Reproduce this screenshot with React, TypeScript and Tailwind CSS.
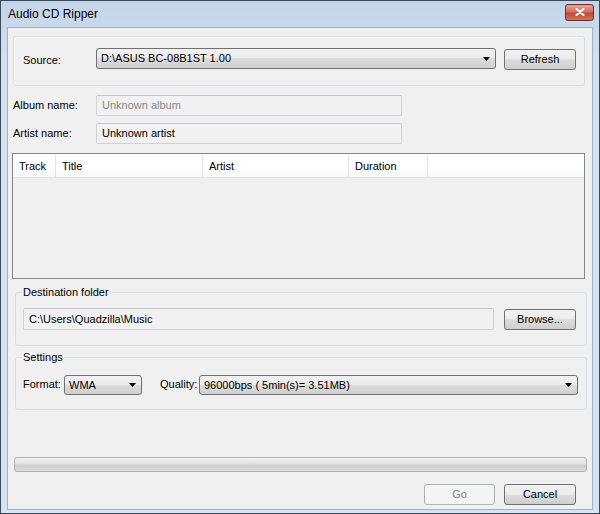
import type { ReactNode } from 'react';

const font = { fontFamily: '"Liberation Sans", Arial, sans-serif' };

function Arrow() {
  return (
    <svg width="7" height="4" viewBox="0 0 7 4" className="shrink-0">
      <path d="M0 0 H7 L3.5 4 Z" fill="#000" />
    </svg>
  );
}

function Button({ children, disabled, className }: { children: ReactNode; disabled?: boolean; className: string }) {
  return (
    <div
      className={
        'flex items-center justify-center rounded-[3px] border text-[11px] ' +
        (disabled
          ? 'border-[#adb2b5] bg-[#f4f4f4] text-[#838383] '
          : 'border-[#707070] bg-[linear-gradient(#f2f2f2_0%,#ebebeb_50%,#dddddd_50%,#cfcfcf_100%)] text-black ') +
        className
      }
    >
      {children}
    </div>
  );
}

function Combo({ text, className }: { text: string; className: string }) {
  return (
    <div
      className={
        'flex items-center justify-between rounded-[3px] border border-[#707070] bg-[linear-gradient(#f2f2f2_0%,#ebebeb_50%,#dddddd_50%,#cfcfcf_100%)] pl-[4px] pr-[5px] text-[11px] text-black ' +
        className
      }
    >
      <span className="whitespace-pre">{text}</span>
      <Arrow />
    </div>
  );
}

function TextBox({ text, muted, className }: { text: string; muted?: boolean; className: string }) {
  return (
    <div
      className={
        'flex items-center rounded-[2px] border border-[#cfd3d8] border-t-[#c3c6cb] bg-[#f1f1f1] pl-[5px] text-[11px] ' +
        (muted ? 'text-[#8a8a8a] ' : 'text-black ') +
        className
      }
    >
      <span className="whitespace-pre">{text}</span>
    </div>
  );
}

const columns = [
  { label: 'Track', w: 'w-[43px]' },
  { label: 'Title', w: 'w-[147px]' },
  { label: 'Artist', w: 'w-[146px]' },
  { label: 'Duration', w: 'w-[79px]' },
];

export default function App() {
  return (
    <div
      style={font}
      className="flex h-[514px] w-[600px] flex-col border border-[#3d4a5a] bg-[linear-gradient(#c3d4e9,#d3e1f1_60px,#d6e3f2)] text-black"
    >
      <div className="flex h-[26px] items-center justify-between pl-[7px] pr-[5px]">
        <span className="text-[12px]">Audio CD Ripper</span>
        <div className="mt-[-4px] flex h-[17px] w-[29px] items-center justify-center rounded-[3px] border border-[#6d2e2a] bg-[linear-gradient(#e8a394,#d0705f_45%,#c24a38_55%,#d4735f)]">
          <svg width="10" height="8" viewBox="0 0 10 8">
            <path d="M1.5 1 L8.5 7 M8.5 1 L1.5 7" stroke="#fff" strokeWidth="2" strokeLinecap="round" />
          </svg>
        </div>
      </div>

      <div className="mx-[6px] mb-[3px] flex flex-1 flex-col border border-[#9fb2c8] bg-[#f0f0f0] text-[11px]">
        <div className="ml-[5px] mt-[8px] flex h-[50px] w-[572px] items-start rounded-[3px] border border-[#d5dfe5] pl-[9px] pt-[11px] shadow-[inset_1px_1px_0_#fff]">
          <span className="w-[73px] pt-[4px]">Source:</span>
          <Combo text={'D:\\ASUS BC-08B1ST 1.00'} className="h-[21px] w-[400px]" />
          <Button className="ml-[8px] mt-[1px] h-[21px] w-[72px]">Refresh</Button>
        </div>

        <div className="ml-[5px] mt-[9px] flex items-center">
          <span className="w-[83px]">Album name:</span>
          <TextBox text="Unknown album" muted className="h-[21px] w-[306px]" />
        </div>
        <div className="ml-[5px] mt-[7px] flex items-center">
          <span className="w-[83px]">Artist name:</span>
          <TextBox text="Unknown artist" className="h-[21px] w-[306px]" />
        </div>

        <div className="ml-[4px] mt-[9px] flex h-[126px] w-[573px] flex-col border border-[#828790] bg-[#f0f0f0]">
          <div className="flex h-[24px] border-b border-[#e2e3e5] bg-[linear-gradient(#ffffff,#ffffff_50%,#f7f8f9)]">
            {columns.map((c) => (
              <div key={c.label} className={'flex items-center border-r border-[#e5e5e5] pl-[6px] pt-[2px] ' + c.w}>
                {c.label}
              </div>
            ))}
          </div>
        </div>

        <fieldset className="ml-[7px] mt-[7px] w-[572px] rounded-[3px] border border-[#d5dfe5] pb-[15px] pl-[7px] pt-[9px]">
          <legend className="ml-[-1px] px-[1px] leading-[13px]">Destination folder</legend>
          <div className="flex items-center">
            <TextBox text={'C:\\Users\\Quadzilla\\Music'} className="h-[22px] w-[471px]" />
            <Button className="ml-[10px] h-[21px] w-[72px]">Browse...</Button>
          </div>
        </fieldset>

        <fieldset className="ml-[7px] mt-[5px] w-[572px] rounded-[3px] border border-[#d5dfe5] pb-[14px] pl-[7px] pt-[11px]">
          <legend className="ml-[-1px] px-[1px] leading-[13px]">Settings</legend>
          <div className="flex items-start">
            <span className="w-[41px] pt-[1px]">Format:</span>
            <Combo text="WMA" className="h-[20px] w-[78px]" />
            <span className="ml-[18px] w-[39px] pt-[1px]">Quality:</span>
            <Combo text="96000bps ( 5min(s)= 3.51MB)" className="h-[20px] w-[379px]" />
          </div>
        </fieldset>

        <div className="ml-[6px] mt-[47px] h-[15px] w-[573px] rounded-[3px] border border-[#b2b2b2] bg-[linear-gradient(#f3f3f3,#e2e2e2_40%,#cdcdcd_60%,#dcdcdc)]" />

        <div className="mt-[12px] flex justify-end pr-[16px]">
          <Button disabled className="h-[21px] w-[71px]">Go</Button>
          <Button className="ml-[9px] h-[21px] w-[72px]">Cancel</Button>
        </div>
      </div>
    </div>
  );
}
